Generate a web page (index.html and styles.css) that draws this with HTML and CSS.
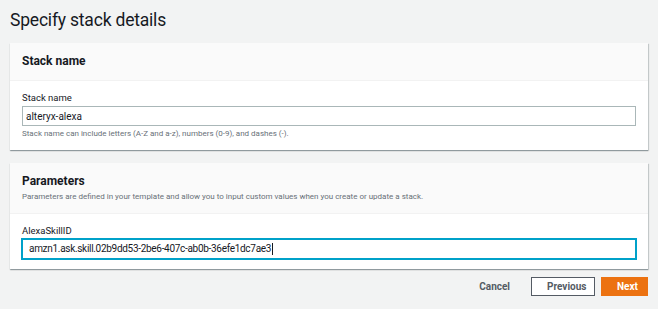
FILE: index.html
```html
<!DOCTYPE html>
<html lang="en">
<head>
    <meta charset="UTF-8">
    <title>Specify stack details</title>
    <link rel="stylesheet" href="styles.css">
</head>
<body>

<div class="page">
    <h1 class="page-title">Specify stack details</h1>

    <!-- Stack name -->
    <div class="card">
        <div class="card-header">
            <h2>Stack name</h2>
        </div>
        <div class="card-body">
            <label class="field-label" for="stackName">Stack name</label>
            <input class="field-input" type="text" id="stackName" value="alteryx-alexa">
            <p class="field-hint">Stack name can include letters (A-Z and a-z), numbers (0-9), and dashes (-).</p>
        </div>
    </div>

    <!-- Parameters -->
    <div class="card">
        <div class="card-header">
            <h2>Parameters</h2>
            <p class="card-desc">Parameters are defined in your template and allow you to input custom values when you create or update a stack.</p>
        </div>
        <div class="card-body">
            <label class="field-label" for="skillId">AlexaSkillID</label>
            <div class="field-input focused">amzn1.ask.skill.02b9dd53-2be6-407c-ab0b-36efe1dc7ae3<span class="caret"></span></div>
        </div>
    </div>

    <!-- Actions -->
    <div class="actions">
        <button class="btn btn-link">Cancel</button>
        <button class="btn btn-normal">Previous</button>
        <button class="btn btn-primary">Next</button>
    </div>
</div>

</body>
</html>
```

FILE: styles.css
```css
/* Global */
* {
    margin: 0;
    padding: 0;
    box-sizing: border-box;
    font-family: Roboto, Arial, sans-serif;
}

body {
    background-color: #f2f3f3;
    color: #16191f;
}

.page {
    padding: 0 10px;
}

.page-title {
    font-size: 17.5px;
    font-weight: 400;
    letter-spacing: -0.2px;
    line-height: 24px;
    padding-top: 8px;
    height: 43px;
    color: #16191f;
}

/* Cards */
.card {
    background: #fff;
    box-shadow: 0 1px 1px 0 rgba(0, 28, 36, 0.3), 1px 1px 1px 0 rgba(0, 28, 36, 0.15);
    margin-bottom: 13px;
}

.card-header {
    background: #fafafa;
    border-bottom: 1px solid #f2f2f2;
    padding: 10px 12px;
}

.card-header h2 {
    font-size: 12px;
    font-weight: 700;
    line-height: 17px;
}

.card-desc {
    font-size: 8px;
    color: #687078;
    line-height: 12px;
    margin-top: 1px;
}

.card-body {
    padding: 9px 12px 10px;
}

/* Form fields */
.field-label {
    display: block;
    font-size: 9.5px;
    line-height: 15px;
    margin-bottom: 1px;
}

.field-input {
    display: block;
    width: 100%;
    height: 20px;
    border: 1px solid #aab7b8;
    font-size: 10px;
    padding: 0 3px;
    color: #16191f;
    outline: none;
    line-height: 18px;
}

.field-input.focused {
    border-color: #00a1c9;
    box-shadow: 0 0 0 1px #00a1c9;
    padding-left: 6px;
    letter-spacing: -0.3px;
}

.caret {
    display: inline-block;
    width: 1px;
    height: 12px;
    margin-left: 1px;
    background: #16191f;
    vertical-align: middle;
}

.field-hint {
    font-size: 8px;
    color: #687078;
    line-height: 12px;
    margin-top: 2px;
}

/* Action buttons */
.actions {
    display: flex;
    justify-content: flex-end;
    align-items: center;
    gap: 6px;
    margin-top: -5px;
}

.btn {
    height: 19px;
    font-size: 10px;
    font-weight: 700;
    padding: 0 15px;
    border: 1px solid transparent;
    background: none;
    cursor: pointer;
}

.btn-link {
    color: #545b64;
    padding: 0;
    margin-right: 14px;
}

.btn-normal {
    background: #fff;
    border-color: #545b64;
    color: #545b64;
    width: 64px;
}

.btn-primary {
    background: #ec7211;
    border-color: #ec7211;
    color: #fff;
    width: 47px;
}
```
